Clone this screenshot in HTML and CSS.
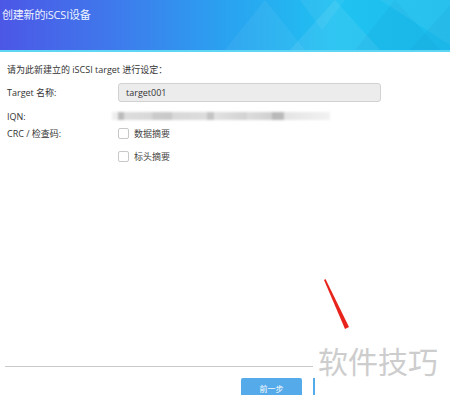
FILE: index.html
```html
<!DOCTYPE html>
<html lang="zh">
<head>
  <meta charset="UTF-8">
  <title>创建新的iSCSI设备</title>
  <link rel="stylesheet" href="styles.css">
</head>
<body>
  <div class="dialog">
    <div class="header">
      <svg class="header-art" width="450" height="50" viewBox="0 0 450 50">
        <polygon points="225,50 265,0 305,50" fill="#ffffff" opacity="0.05"/>
        <polygon points="290,50 335,0 380,50" fill="#ffffff" opacity="0.08"/>
        <polygon points="300,0 345,0 322,30" fill="#ffffff" opacity="0.06"/>
        <polygon points="355,50 395,0 440,50" fill="#0a6fb8" opacity="0.08"/>
        <polygon points="380,0 450,0 450,45" fill="#ffffff" opacity="0.06"/>
        <polygon points="410,50 450,5 450,50" fill="#0a6fb8" opacity="0.07"/>
      </svg>
      <h1 class="title">创建新的iSCSI设备</h1>
    </div>

    <div class="content">
      <p class="intro">请为此新建立的 iSCSI target 进行设定：</p>

      <div class="row">
        <span class="label">Target 名称:</span>
        <div class="input">target001</div>
      </div>

      <div class="row row-iqn">
        <span class="label">IQN:</span>
        <div class="iqn-blur"></div>
      </div>

      <div class="row row-check">
        <span class="label">CRC / 检查码:</span>
        <label class="check"><span class="box"></span>数据摘要</label>
      </div>

      <div class="row row-check">
        <span class="label"></span>
        <label class="check"><span class="box"></span>标头摘要</label>
      </div>
    </div>

    <div class="footer">
      <div class="rule"></div>
      <div class="buttons">
        <button class="btn">前一步</button>
        <button class="btn btn-next"></button>
      </div>
    </div>

    <svg class="arrow" width="40" height="60" viewBox="0 0 40 60">
      <polygon points="4,1 5.5,0 29,48 25,50" fill="#e8231b"/>
    </svg>
    <div class="watermark">软件技巧</div>
  </div>
</body>
</html>
```

FILE: styles.css
```css
* {
  margin: 0;
  padding: 0;
  box-sizing: border-box;
}

html, body {
  width: 450px;
  height: 395px;
  overflow: hidden;
  background: #fff;
  font-family: "Open Sans", "Noto Sans CJK SC", sans-serif;
}

.dialog {
  position: relative;
  height: 395px;
}

.header {
  position: relative;
  height: 52px;
  background: linear-gradient(90deg, #4c57e6 0%, #3f79ec 25%, #2aa2f0 50%, #1fc2f1 75%, #1bbdec 100%);
  border-bottom: 2px solid #5fd6f3;
  overflow: hidden;
}

.header-art {
  position: absolute;
  left: 0;
  top: 0;
}

.title {
  position: relative;
  font-size: 11px;
  font-weight: normal;
  color: #eef4ff;
  padding: 6px 0 0 2px;
  letter-spacing: -0.2px;
}

.content {
  padding: 11px 0 0 7px;
  font-size: 9px;
  color: #333;
}

.intro {
  height: 14px;
  line-height: 14px;
  margin-bottom: 5px;
}

.row {
  display: flex;
  align-items: center;
  height: 20px;
}

.label {
  width: 111px;
  flex: none;
}

.input {
  width: 263px;
  height: 19px;
  line-height: 17px;
  padding-left: 7px;
  background: #ececec;
  border: 1px solid #d2d2d2;
  border-radius: 3px;
  color: #333;
}

.row-iqn {
  height: 20px;
  margin-top: 4px;
}

.iqn-blur {
  width: 218px;
  height: 8px;
  margin-left: -6px;
  background: linear-gradient(90deg,
    #eee 0, #eee 6px, #bbb 6px, #bbb 12px, #ddd 12px, #d8d8d8 40px,
    #ccc 40px, #c8c8c8 60px, #d8d8d8 60px, #ddd 95px, #c4c4c4 95px, #c4c4c4 102px,
    #e2e2e2 102px, #d2d2d2 135px, #ddd 135px, #d0d0d0 160px, #b8b8b8 160px,
    #bbb 172px, #e4e4e4 172px, #f2f2f2 218px);
  filter: blur(0.8px);
}

.row-check {
  height: 19px;
  margin-top: -2px;
}

.row-check + .row-check {
  margin-top: 4px;
}

.check {
  display: flex;
  align-items: center;
  color: #444;
}

.box {
  width: 11px;
  height: 11px;
  border: 1px solid #c8c8c8;
  border-radius: 2px;
  background: #fff;
  margin-right: 5px;
}

.footer {
  position: absolute;
  left: 0;
  right: 0;
  top: 366px;
}

.rule {
  margin-left: 5px;
  width: 308px;
  height: 1px;
  background: #c9c9c9;
}

.buttons {
  display: flex;
  padding-left: 241px;
  margin-top: 11px;
  gap: 11px;
}

.btn {
  width: 61px;
  height: 20px;
  border: none;
  border-radius: 2px;
  background: #55aaea;
  color: #fff;
  font-family: "Noto Sans CJK SC", sans-serif;
  font-size: 8px;
}

.btn-next {
  width: 80px;
  background: #fff;
  border-left: 2px solid #55aaea;
  border-radius: 0;
}

.arrow {
  position: absolute;
  left: 320px;
  top: 279px;
}

.watermark {
  position: absolute;
  left: 318px;
  top: 340px;
  padding-right: 4px;
  font-family: "Noto Sans CJK SC", sans-serif;
  font-size: 30px;
  line-height: 40px;
  color: #cdcdcd;
  background: #fff;
}
```
